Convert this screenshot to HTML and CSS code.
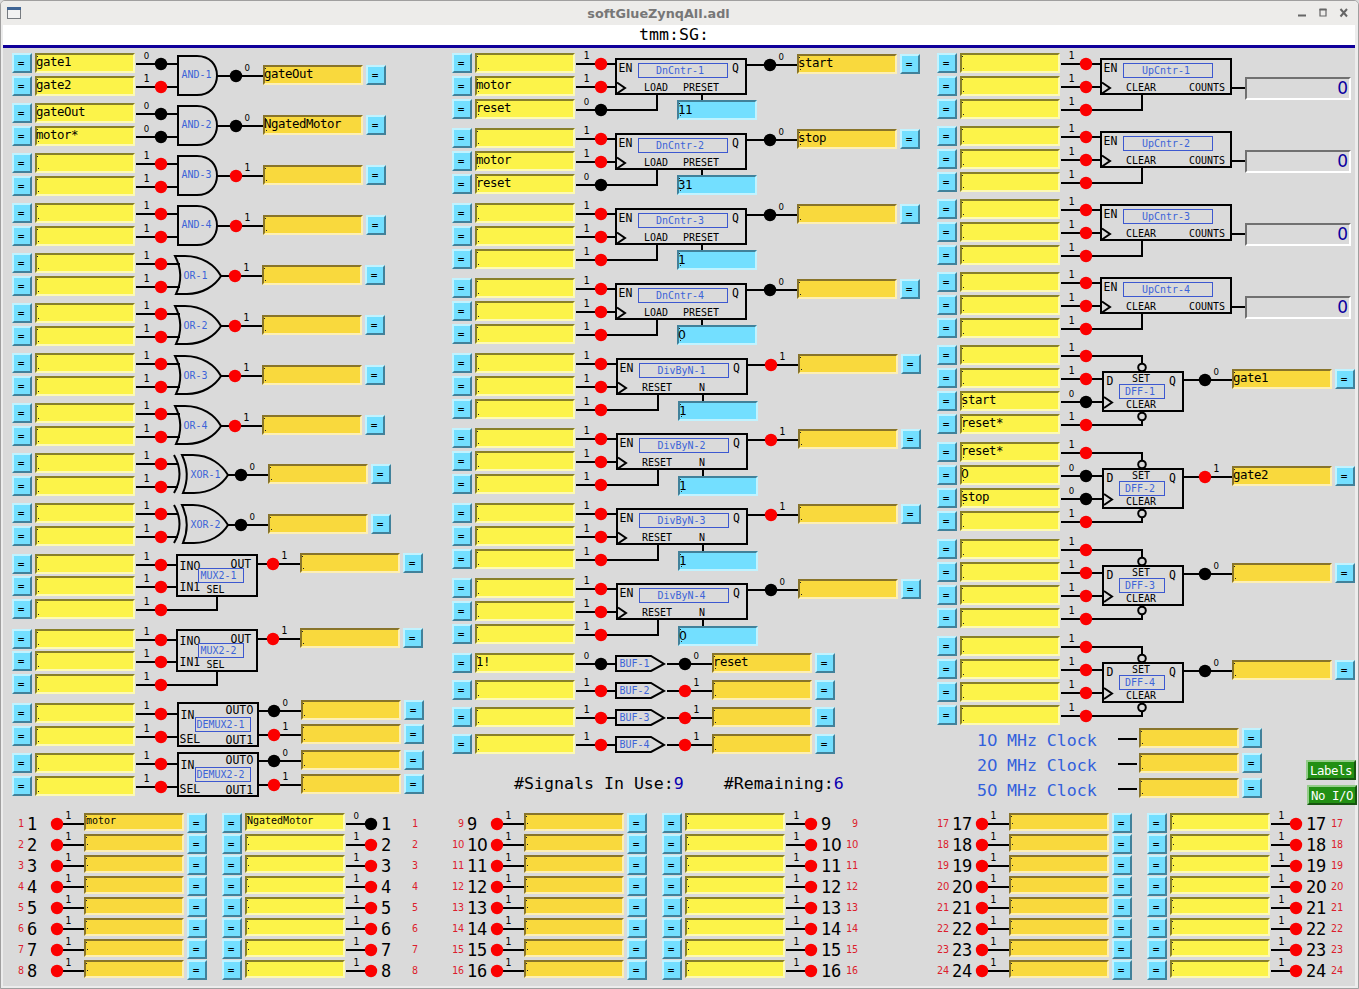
FILE: index.html
```html
<!DOCTYPE html>
<html lang="en">
<head>
<meta charset="utf-8">
<title>softGlueZynqAll.adl</title>
<link rel="stylesheet" href="styles.css">
</head>
<body>
<div class="window">
  <header class="titlebar">
    <svg class="app-icon" width="14" height="12" viewBox="0 0 14 12"><rect x=".5" y=".5" width="13" height="11" fill="#f2f2f2" stroke="#777b80"/><rect x="0" y="0" width="14" height="3" fill="#3f6494"/></svg>
    <h1 class="title">softGlueZynqAll.adl</h1>
    <svg class="controls" width="52" height="10" viewBox="0 0 52 10" fill="none" stroke="#666" stroke-width="2"><path d="M1 7.500H9"/><path d="M23 1.500h6v6.500h-6z" stroke-width="1.2"/><path d="M22.500 1.500h7"/><path d="M43.500 1l6.500 7.500M50 1l-6.500 7.500"/></svg>
  </header>
  <div class="prefix">tmm:SG:</div>
  <main class="board">
    <section class="column" id="gates"></section>
    <section class="column" id="counters"></section>
    <section class="column" id="flops"></section>
  </main>
  <footer class="banks" id="banks"></footer>
</div>
<script src="app.js"></script>
</body>
</html>
```
FILE: styles.css
```css
* { box-sizing: border-box; }

body {
  margin: 0;
  background: #dadada;
  font-family: "DejaVu Sans Mono", monospace;
  color: #000;
  overflow: hidden;
}

.window {
  width: 1359px;
  height: 989px;
  border: 1px solid #a09f9f;
  border-radius: 5px 5px 0 0;
  background: #dadada;
  box-shadow: inset 2px -2px 0 #ececec, inset -3px 0 0 #ececec;
  overflow: hidden;
}

.titlebar {
  height: 24px;
  padding: 0 9px 0 6px;
  background: #edecea;
  display: grid;
  grid-template-columns: 60px 1fr 60px;
  align-items: center;
}
.title {
  margin: 0 0 0 -39px;
  text-align: center;
  font: bold 12.8px "DejaVu Sans", sans-serif;
  color: #777;
}
.controls { justify-self: end; }

.prefix {
  height: 23px;
  margin: 0 3px 0 2px;
  padding-right: 10px;
  background: #fff;
  border-bottom: 3px solid #10009a;
  text-align: center;
  font-size: 16.6px;
  line-height: 20px;
}

.board {
  height: 765px;
  padding: 5px 0 0 11px;
  display: grid;
  grid-template-columns: 440px 485px 421px;
}
.column { display: flex; flex-direction: column; }
.block { display: flex; align-items: flex-start; flex: none; }
.h50 { height: 50px; }
.h75 { height: 75px; }
.h27 { height: 27px; }
.h73 { height: 73px; }
.h97 { height: 97px; }

.ports { display: flex; flex-direction: column; gap: 3px; flex: none; }
.ports.mux-in { padding-top: 1px; }
.ports.mux-in .port:first-child { margin-bottom: -1px; }
.ports.gap4 { gap: 4px; }
.port { display: flex; gap: 3px; flex: none; }
.up3 { margin-top: -3px; }
.down1 { padding-top: 1px; }
.down11 { padding-top: 11px; }
.down12 { padding-top: 12px; }
.down24 { padding-top: 24px; }

.btn {
  width: 20px;
  height: 20px;
  padding: 0 2px 0 0;
  border: 2px solid;
  border-color: #c1f3ff #41819a #41819a #c1f3ff;
  background: #73dfff;
  font: 11px/15px "DejaVu Sans Mono", monospace;
  color: #000;
  text-align: center;
}
.field {
  position: relative;
  width: 100px;
  height: 20px;
  border: 2px solid;
  font-size: 12.4px;
  line-height: 14px;
  letter-spacing: -.47px;
  text-indent: -1px;
  white-space: pre;
}
.field::before {
  content: "";
  position: absolute;
  left: 1px;
  top: 13px;
  width: 1px;
  height: 1px;
  background: #222;
  box-shadow: -1px -12px 0 #222;
}
.in { background: #fcf349; border-color: #88802a #fdfab4 #fdfab4 #88802a; }
.out { background: #f9d93d; border-color: #88742a #fdefb4 #fdefb4 #88742a; }
.preset {
  position: absolute;
  width: 80px;
  background: #73dfff;
  border-color: #41819a #c1f3ff #c1f3ff #41819a;
  line-height: 16px;
}
.dn .preset { left: 102px; top: 47px; }
.div .preset { left: 103px; top: 48px; }
.count {
  width: 106px;
  height: 23px;
  border: 2px solid;
  border-color: #707070 #fff #fff #707070;
  color: #0b00a0;
  font: 17px/19px "DejaVu Sans", sans-serif;
  text-align: right;
  padding-right: 1px;
}

.zero { font-family: "DejaVu Sans", sans-serif; letter-spacing: -.04em; }
.schematic { position: relative; flex: none; }
.schematic svg { display: block; overflow: visible; }
.wire { fill: none; stroke: #000; stroke-width: 2; }
.dot1 { fill: #fb0000; }
.dot0 { fill: #000; }
.name { fill: #3c64d8; }
.name-box { fill: none; stroke: #3c58d0; }
.s { font-size: 10px; }
.m { font-size: 12px; }
.value { font: 10px "DejaVu Sans Mono", monospace; text-anchor: middle; }
.value.low { font: 8.6px "DejaVu Sans", sans-serif; }

.summary {
  display: flex;
  gap: 40px;
  padding: 11px 0 0 62px;
  font-size: 16.6px;
  line-height: 23px;
}
.summary b { font-weight: normal; color: #0b00b0; }

.clock-area { display: flex; margin-top: -5px; }
.clocks { display: flex; flex-direction: column; gap: 5px; padding-left: 40px; }
.clock { display: flex; align-items: center; height: 20px; }
.clock-name { width: 141px; font-size: 16.6px; line-height: 20px; padding-top: 5px; color: #3260dc; }
.clock-wire { width: 19px; height: 2px; margin: 2px 2px 0 0; background: #000; }
.menu { display: flex; flex-direction: column; gap: 5px; padding: 32px 0 0 44px; }
.green {
  width: 50px;
  height: 20px;
  padding: 0;
  border: 2px solid;
  border-color: #94cd8a #175510 #175510 #94cd8a;
  background: #229014;
  color: #fff;
  font: 12.4px/15px "DejaVu Sans Mono", monospace;
  letter-spacing: -.47px;
}
.green:last-child { margin-left: 1px; }

.banks { display: grid; grid-template-columns: 440px 485px 430px; }
.bank-row { display: flex; height: 21px; align-items: flex-start; }
.bank-row .field { height: 18px; font-size: 10px; line-height: 11px; letter-spacing: 0; text-indent: 0; }
.bank-row .field::before { top: 8px; box-shadow: -1px -7px 0 #222; }
.bank-row .right { margin-left: 15px; }
.pin { flex: none; font-size: 17px; line-height: 21px; padding-top: 1px; width: 22px; letter-spacing: -.2px; }
.tag { flex: none; width: 23px; font-size: 10px; line-height: 21px; text-align: right; color: #dc1d2c; }
.left-tag { margin-right: 3px; }
.right-tag { margin-left: -8px; }
```
FILE: app.js
```js
// Plain oval zeros: wrap each 0 so it takes the proportional face.
const zeros = (s, tag) => s.replace(/0/g, `<${tag} class="zero">0</${tag}>`);

const button = '<button class="btn">=</button>';
const field = (kind, text = '') => `<div class="field ${kind}">${zeros(text, 'span')}</div>`;
const inPort = text => `<div class="port">${button}${field('in', text)}</div>`;
const outPort = text => `<div class="port">${field('out', text)}${button}</div>`;

const wire = d => `<path class="wire" d="${d}"/>`;
const text = (x, y, s, size = 's', cls = '') =>
  `<text class="${size} ${cls}" x="${x}" y="${y}" textLength="${s.length * (size === 's' ? 6 : 6.9)}" lengthAdjust="spacingAndGlyphs">${zeros(s, 'tspan')}</text>`;
const dot = (x, y, v) => `<circle class="dot${v}" cx="${x}" cy="${y}" r="6.2"/>`;
const value = (x, y, v) => `<text class="value ${v ? '' : 'low'}" x="${x}" y="${y - 4.6}">${v}</text>`;
const input = (y, v, d) => wire(`M124 ${y}${d}`) + dot(149, y, v) + value(134.4, y, v);
const output = (x, y, v, from, to) => wire(`M${from} ${y}H${to}`) + dot(x, y, v) + value(x + 11.2, y, v);
const box = (x, y, w, h) => wire(`M${x} ${y}h${w}v${h}h${-w}z`);
const nameBox = (x, y, w) => `<rect class="name-box" x="${x}" y="${y}" width="${w}" height="14"/>`;
const clockMark = (x, y) => wire(`M${x} ${y - 5.500}l8 5.500l-8 5.500`);

function block(cls, ins, inCls, width, height, art, outs, outCls, extra = '') {
  return `<div class="block ${cls}"><div class="ports ${inCls}">${ins.map(inPort).join('')}</div>
  <div class="schematic"><svg width="${width - 123}" height="${height}" viewBox="123 0 ${width - 123} ${height}">${art}</svg>${extra}</div>
  <div class="ports ${outCls}">${outs}</div></div>`;
}

function andGate(n, ins, vals, out, q) {
  const art = input(11, vals[0], 'H166') + input(34, vals[1], 'H166') +
    wire('M166 3H185C198 3 205 12 205 22.500S198 42 185 42H166Z') +
    text(169.5, 25.3, `AND-${n}`, 's', 'name') + output(224, 23, q, 205, 251);
  return block('h50', ins, '', 251, 46, art, outPort(out), 'down12');
}
function orGate(n) {
  const art = input(11, 1, 'H168') + input(34, 1, 'H168') +
    wire('M163 3H173C190 3 203 12 209 23C203 33 190 41 175 41H164Q173 22 163 3Z') +
    text(171.5, 26.3, `OR-${n}`, 's', 'name') + output(223, 23, 1, 209, 250);
  return block('h50', ['', ''], '', 250, 46, art, outPort(''), 'down12');
}
function xorGate(n) {
  const art = input(11, 1, 'H166') + input(34, 1, 'H166') + wire('M162 2Q173 21 162 40') +
    wire('M170 2H181C198 2 210 12 216 22C210 32 198 40 182 40H171Q179 21 170 2Z') +
    text(178.5, 25.3, `XOR-${n}`, 's', 'name') + output(229, 22, 0, 216, 256);
  return block('h50', ['', ''], '', 256, 46, art, outPort(''), 'down11');
}
function mux(n) {
  const art = input(12, 1, 'H165') + input(34, 1, 'H165') + input(57, 1, 'H205V43') +
    box(165, 2, 80, 41) + text(167.5, 17, 'IN0', 'm') + text(167.5, 37.5, 'IN1', 'm') +
    text(218.5, 14.5, 'OUT', 'm') + text(194.5, 40, 'SEL') + nameBox(186.5, 15.5, 45) +
    text(188.5, 26.3, `MUX2-${n}`, 's', 'name') + output(261, 11, 1, 245, 288);
  return block('h75', ['', '', ''], 'mux-in', 288, 70, art, outPort(''), '');
}
function demux(n) {
  const art = input(11, 1, 'H166') + input(34, 1, 'H166') + box(166, 0, 80, 43) +
    text(168.5, 16, 'IN', 'm') + text(167.5, 39.5, 'SEL', 'm') +
    text(213.5, 11.3, 'OUT0', 'm') + text(213.5, 41.3, 'OUT1', 'm') +
    nameBox(183.5, 14.5, 55) + text(184.5, 25.3, `DEMUX2-${n}`, 's', 'name') +
    output(262, 8, 0, 246, 289) + output(262, 32, 1, 246, 289);
  return block('h50', ['', ''], '', 289, 46, art, outPort('') + outPort(''), 'up3 gap4');
}

// Shared body of the down counters (dx = 0), dividers (dx = 1) and up counters.
function counterBody(dx, name, vals, nameX) {
  return input(11, vals[0], `H${164 + dx}`) + input(34, vals[1], `H${164 + dx}`) +
    input(57, vals[2], `H${205 + dx}V41`) + box(164 + dx, 6, 130, 35) + clockMark(165 + dx, 35) +
    text(166.5 + dx, 19.2, 'EN', 'm') + nameBox(186.5 + dx, 10.5, 89) +
    text(nameX + dx, 21.3, name, 's', 'name');
}
function dnCounter(n, ins, vals, out, preset) {
  const art = counterBody(0, `DnCntr-${n}`, vals, 204) + text(280, 19, 'Q', 'm') +
    text(192, 38.3, 'LOAD') + text(231, 38.3, 'PRESET') + wire('M250 41v7') +
    output(318, 12, 0, 294, 345);
  return block('h75 dn', ins, '', 345, 70, art, outPort(out), 'down1', field('preset', preset));
}
function divider(n, q, preset) {
  const art = counterBody(1, `DivByN-${n}`, [1, 1, 1], 204.5) + text(281, 19, 'Q', 'm') +
    text(190, 38.3, 'RESET') + text(247, 38.3, 'N') + wire('M251 41v7') +
    output(319, 12, q, 295, 346);
  return block('h75 div', ['', '', ''], '', 346, 70, art, outPort(''), 'down1', field('preset', preset));
}
function buffer(n, inText, v, out) {
  const art = input(11, v, 'H164') + wire('M164 3H199L212 11L199 18H164Z') +
    text(167.5, 14.3, `BUF-${n}`, 's', 'name') + output(233, 11, v, 215, 260);
  return block('h27', [inText], '', 260, 22, art, outPort(out), '');
}
function upCounter(n) {
  const art = counterBody(0, `UpCntr-${n}`, [1, 1, 1], 205) +
    text(189, 38.3, 'CLEAR') + text(252, 38.3, 'COUNTS') + wire('M294 35H308');
  return block('h73', ['', '', ''], '', 308, 70, art, '<div class="count">0</div>', 'down24');
}
function flop(n, ins, vals, out, q) {
  const ring = y => `<circle class="wire" cx="205" cy="${y}" r="3.8"/>`;
  const art = input(11, vals[0], 'H205V19') + input(34, vals[1], 'H166') +
    input(57, vals[2], 'H166') + input(80, vals[3], 'H205V75') + ring(22.5) + ring(71.5) +
    box(166, 27, 80, 39) + clockMark(167, 57.5) + text(169.5, 40, 'D', 'm') +
    text(232, 40, 'Q', 'm') + text(195, 37.3, 'SET') + text(189, 63.3, 'CLEAR') +
    nameBox(182.5, 39.5, 45) + text(188, 50.3, `DFF-${n}`, 's', 'name') +
    output(268, 35, q, 246, 295);
  return block('h97', ins, '', 295, 92, art, outPort(out), 'down24');
}

document.getElementById('gates').innerHTML =
  andGate(1, ['gate1', 'gate2'], [0, 1], 'gateOut', 0) +
  andGate(2, ['gateOut', 'motor*'], [0, 0], 'NgatedMotor', 0) +
  andGate(3, ['', ''], [1, 1], '', 1) + andGate(4, ['', ''], [1, 1], '', 1) +
  [1, 2, 3, 4].map(orGate).join('') + [1, 2].map(xorGate).join('') +
  [1, 2].map(mux).join('') + [1, 2].map(demux).join('');

document.getElementById('counters').innerHTML =
  dnCounter(1, ['', 'motor', 'reset'], [1, 1, 0], 'start', '11') +
  dnCounter(2, ['', 'motor', 'reset'], [1, 1, 0], 'stop', '31') +
  dnCounter(3, ['', '', ''], [1, 1, 1], '', '1') +
  dnCounter(4, ['', '', ''], [1, 1, 1], '', '0') +
  divider(1, 1, '1') + divider(2, 1, '1') + divider(3, 1, '1') + divider(4, 0, '0') +
  buffer(1, '1!', 0, 'reset') + buffer(2, '', 1, '') + buffer(3, '', 1, '') + buffer(4, '', 1, '') +
  '<div class="summary"><span>#Signals In Use:<b>9</b></span><span>#Remaining:<b>6</b></span></div>';

const clock = mhz => `<div class="clock"><span class="clock-name">${zeros(mhz + ' MHz Clock', 'span')}</span>
  <span class="clock-wire"></span>${outPort('')}</div>`;
document.getElementById('flops').innerHTML =
  [1, 2, 3, 4].map(upCounter).join('') +
  flop(1, ['', '', 'start', 'reset*'], [1, 1, 0, 1], 'gate1', 0) +
  flop(2, ['reset*', '0', 'stop', ''], [1, 0, 0, 1], 'gate2', 1) +
  flop(3, ['', '', '', ''], [1, 1, 1, 1], '', 0) +
  flop(4, ['', '', '', ''], [1, 1, 1, 1], '', 0) +
  `<div class="clock-area"><div class="clocks">${['10', '20', '50'].map(clock).join('')}</div>
   <div class="menu"><button class="green">Labels</button><button class="green">No I/O</button></div></div>`;

function bankRow(n) {
  const v = n === 1 ? 0 : 1;
  const num = zeros(String(n), 'span');
  const leftLead = wire('M8 11H35') + dot(8, 11, 1) + value(19.3, 10.5, 1);
  const rightLead = wire('M1 11H26') + dot(26, 11, v) + value(11.3, 10.5, v);
  return `<div class="bank-row"><span class="tag left-tag">${num}</span><span class="pin">${num}</span>
    <div class="schematic"><svg width="35" height="20">${leftLead}</svg></div>
    <div class="port">${field('out', n === 1 ? 'motor' : '')}${button}</div>
    <div class="port right">${button}${field('in', n === 1 ? 'NgatedMotor' : '')}</div>
    <div class="schematic"><svg width="36" height="20">${rightLead}</svg></div>
    <span class="pin">${num}</span><span class="tag right-tag">${num}</span></div>`;
}
document.getElementById('banks').innerHTML = [0, 8, 16].map(start =>
  `<div class="bank">${[1, 2, 3, 4, 5, 6, 7, 8].map(i => bankRow(start + i)).join('')}</div>`).join('');
```
